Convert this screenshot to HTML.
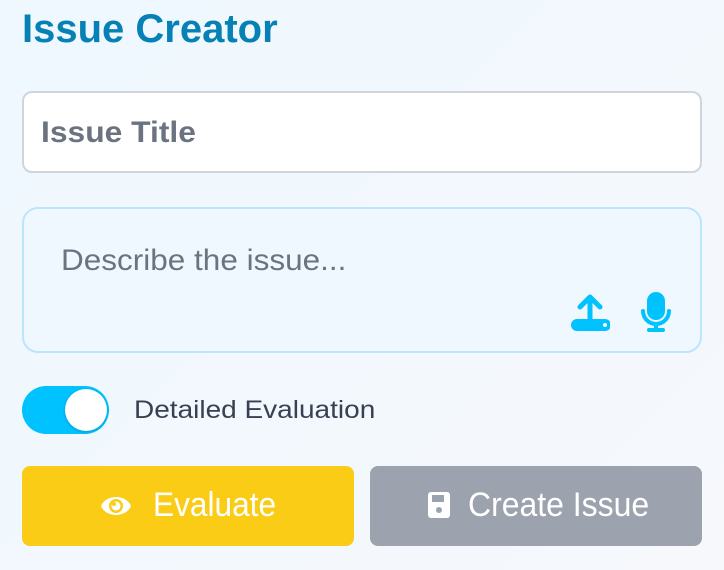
<!DOCTYPE html>
<html><head><style>
body{margin:0;width:724px;height:570px;overflow:hidden;background:linear-gradient(135deg,#eef8fe,#f6f8fc);font-family:"Liberation Sans",sans-serif;position:relative}
.s{display:inline-block;transform-origin:0 50%}
.t{position:absolute;left:22px;top:7px;font-size:40px;font-weight:bold;color:#0681b5;margin:0}
.in{position:absolute;left:22px;top:91px;width:676px;height:78px;border:2px solid #d1d5db;border-radius:10px;background:#fff}
.in span{position:absolute;left:17px;top:23px;font-size:30px;font-weight:bold;color:#6b7280}
.ta{position:absolute;left:22px;top:207px;width:676px;height:142px;border:2px solid #bae6fd;border-radius:16px;background:#eff8fe}
.ta>span{position:absolute;left:37px;top:35px;font-size:30px;color:#6b7280}
.tg{position:absolute;left:22px;top:386px;width:87px;height:48px;border-radius:24px;background:#00c2ff}
.tg i{position:absolute;right:2px;top:3px;width:42px;height:42px;border-radius:50%;background:#fff;box-shadow:0 1px 3px rgba(0,0,0,.2)}
.lb{position:absolute;left:134px;top:396px;font-size:25px;color:#374151}
.b{position:absolute;top:466px;width:332px;height:80px;border-radius:8px;color:#fff;font-size:34px}
.b svg,.b span{position:absolute}
</style></head><body>
<h1 class="t"><span class="s" style="transform:scaleX(1.0)">Issue Creator</span></h1>
<div class="in"><span class="s" style="transform:scaleX(1.06)">Issue Title</span></div>
<div class="ta"><span class="s" style="transform:scaleX(1.05)">Describe the issue...</span>
<svg style="position:absolute;left:546px;top:84px" width="40" height="40" viewBox="0 0 40 40"><path d="M20 5v24M10 14l10-10 10 10" stroke="#00c2ff" stroke-width="5" fill="none" stroke-linecap="round" stroke-linejoin="round"/><rect x="1" y="26" width="40" height="12" rx="6" fill="#00c2ff"/><circle cx="35" cy="32" r="2" fill="#fff"/></svg>
<svg style="position:absolute;left:616px;top:82px" width="32" height="42" viewBox="0 0 32 42"><rect x="7" y="1" width="18" height="28" rx="9" fill="#00c2ff"/><path d="M3 20a13 13 0 0 0 26 0" stroke="#00c2ff" stroke-width="4" fill="none" stroke-linecap="round"/><path d="M16 33v6M9 39h14" stroke="#00c2ff" stroke-width="4" stroke-linecap="round"/></svg>
</div>
<div class="tg"><i></i></div>
<div class="lb"><span class="s" style="transform:scaleX(1.12)">Detailed Evaluation</span></div>
<div class="b" style="left:22px;background:#facc15"><svg style="left:78px;top:26px" width="32" height="28" viewBox="0 0 32 28"><path d="M1 14C6 2 26 2 31 14C26 26 6 26 1 14Z" fill="#fff"/><circle cx="16" cy="14" r="7" fill="#facc15"/><circle cx="16" cy="14" r="4.5" fill="#fff"/><circle cx="14" cy="12" r="2" fill="#facc15"/></svg><span class="s" style="left:131px;top:20px;transform:scaleX(0.93)">Evaluate</span></div>
<div class="b" style="left:370px;background:#9ca3af"><svg style="left:58px;top:26px" width="22" height="26" viewBox="0 0 22 26"><rect x="0" y="0" width="22" height="26" rx="3" fill="#fff"/><rect x="4" y="3" width="12" height="7" fill="#9ca3af"/><circle cx="11" cy="18" r="3" fill="#9ca3af"/></svg><span class="s" style="left:98px;top:20px;transform:scaleX(0.94)">Create Issue</span></div>
</body></html>
